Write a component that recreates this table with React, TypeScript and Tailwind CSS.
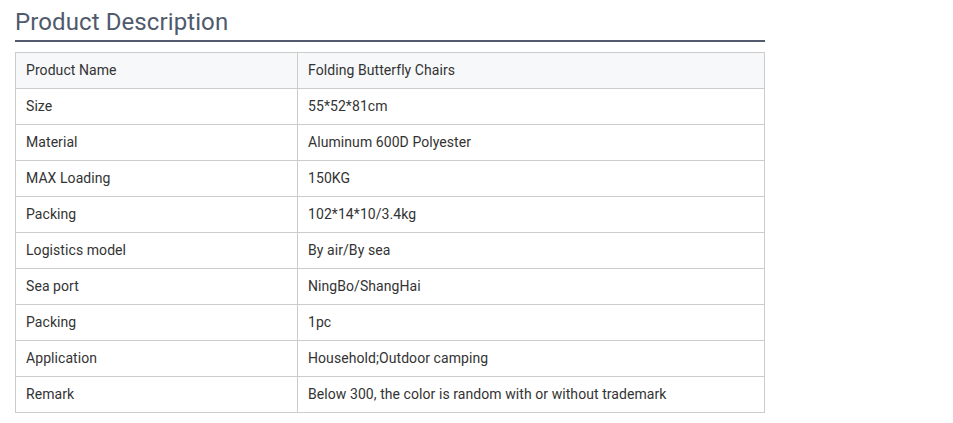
import React from "react";

const rows: [string, string][] = [
  ["Product Name", "Folding Butterfly Chairs"],
  ["Size", "55*52*81cm"],
  ["Material", "Aluminum 600D Polyester"],
  ["MAX Loading", "150KG"],
  ["Packing", "102*14*10/3.4kg"],
  ["Logistics model", "By air/By sea"],
  ["Sea port", "NingBo/ShangHai"],
  ["Packing", "1pc"],
  ["Application", "Household;Outdoor camping"],
  ["Remark", "Below 300, the color is random with or without trademark"],
];

export default function App() {
  return (
    <div className="min-h-[423px] w-[953px] bg-white pl-[15px]" style={{ fontFamily: "Roboto, 'Liberation Sans', sans-serif" }}>
      <div className="w-[750px]">
        <h2 className="border-b-2 border-[#525c6e] pt-[4px] text-[24px] leading-[36px] font-normal tracking-[0.1px] text-[#4f5a6c]">
          Product Description
        </h2>
        <table className="mt-[10px] w-[750px] border-collapse text-[14px] tracking-[0.07px] text-[#333333]">
          <tbody>
            {rows.map(([k, v], i) => (
              <tr key={i} className={i === 0 ? "bg-[#f7f8fa]" : "bg-white"}>
                <td className="h-[36px] w-[282px] border border-[#cccccc] px-[10px] py-0 align-middle">{k}</td>
                <td className="h-[36px] border border-[#cccccc] px-[10px] py-0 align-middle">{v}</td>
              </tr>
            ))}
          </tbody>
        </table>
      </div>
    </div>
  );
}
